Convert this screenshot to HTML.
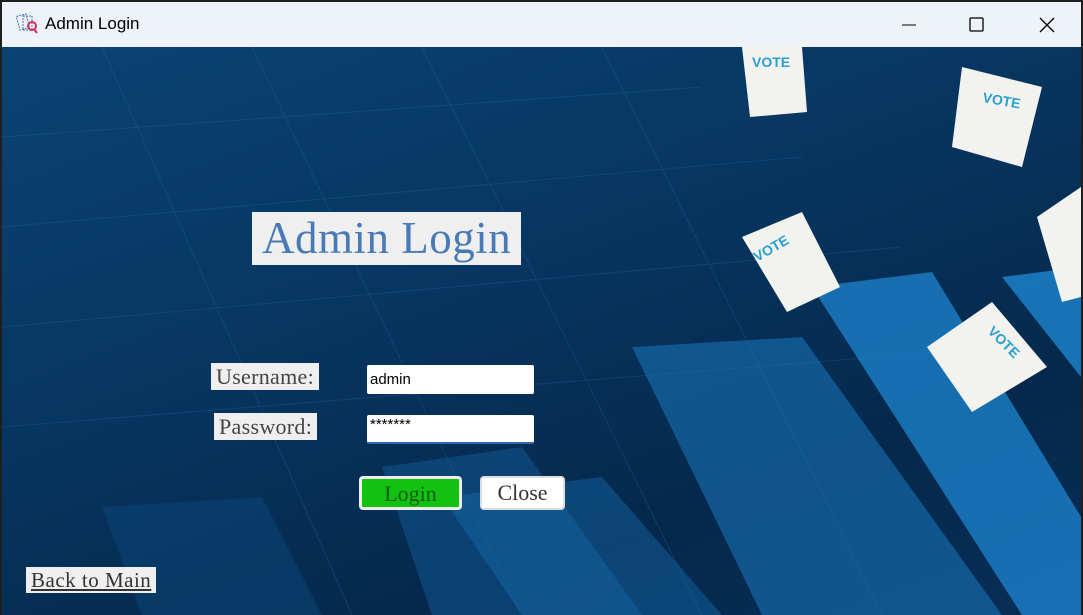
<!DOCTYPE html>
<html><head><meta charset="utf-8"><style>
body{margin:0;width:1083px;height:615px;overflow:hidden;background:#1f1f1f;font-family:"Liberation Serif",serif;position:relative}
.tb{position:absolute;left:2px;top:2px;width:1079px;height:45px;background:#eef2f9;font-family:"Liberation Sans",sans-serif}
.tb .t{position:absolute;left:43px;top:12px;font-size:17px;color:#000}
.main{position:absolute;left:2px;top:47px;width:1079px;height:568px;overflow:hidden;background:linear-gradient(160deg,#0b4373 0%,#073661 40%,#05284c 75%,#082f58 100%)}
.lbl{position:absolute;background:#efeff0;color:#444;font-size:22px;line-height:27px;padding:0 5px;letter-spacing:0.3px}
.in{position:absolute;background:#fff;border-radius:2px;font-family:"Liberation Sans",sans-serif;font-size:15px;color:#000;line-height:30px;padding-left:3px;box-sizing:border-box}
.btn{position:absolute;border:2px solid #ddd;border-radius:4px;font-size:22px;text-align:center;box-sizing:border-box;line-height:30px}
</style></head><body>
<div class="tb">
<svg style="position:absolute;left:14px;top:10px" width="24" height="24" viewBox="0 0 24 24"><rect x="2" y="3" width="10" height="14" fill="none" stroke="#47a" stroke-dasharray="2 1" transform="rotate(-15 7 10)"/><rect x="7" y="4" width="9" height="14" fill="none" stroke="#47a" stroke-dasharray="2 1"/><circle cx="16" cy="14" r="4" fill="none" stroke="#d03060" stroke-width="2"/><line x1="18" y1="17" x2="21" y2="21" stroke="#d03060" stroke-width="2"/></svg>
<div class="t">Admin Login</div>
<svg style="position:absolute;left:898px;top:14px" width="160" height="18"><line x1="2" y1="9" x2="16" y2="9" stroke="#000"/><rect x="70" y="2" width="13" height="13" rx="1" fill="none" stroke="#000" stroke-width="1.3"/><path d="M140 2 L154 16 M154 2 L140 16" stroke="#000" stroke-width="1.3"/></svg>
</div>
<div class="main">
<svg width="1079" height="568" style="position:absolute;left:0;top:0">
<g stroke="#2a6aa0" stroke-opacity="0.3" stroke-width="1">
<path d="M0 90 L700 40 M0 180 L800 110 M0 280 L900 200 M100 0 L350 568 M250 0 L520 568 M420 0 L700 568 M600 0 L880 568 M0 380 L1000 300"/>
</g>
<polygon points="630,300 800,290 1000,568 760,568" fill="#1a78c0" opacity="0.55"/>
<polygon points="810,240 930,225 1079,470 1079,568 1020,568" fill="#1d86d0" opacity="0.75"/>
<polygon points="1000,230 1079,220 1079,330" fill="#1d86d0" opacity="0.8"/>
<polygon points="380,420 520,400 640,568 430,568" fill="#135f9e" opacity="0.45"/>
<polygon points="440,450 600,430 720,568 520,568" fill="#1670b5" opacity="0.4"/>
<polygon points="100,460 260,450 320,568 140,568" fill="#0d4d85" opacity="0.4"/>
<g fill="#f2f2ee"><polygon points="740,0 800,0 805,65 748,70"/><polygon points="960,20 1040,40 1020,120 950,100"/><polygon points="740,190 800,165 838,240 785,265"/><polygon points="925,300 990,255 1045,320 970,365"/><polygon points="1035,170 1079,140 1079,250 1060,255"/></g>
<g fill="#29a0d0" font-family="Liberation Sans" font-weight="bold" font-size="14"><text x="750" y="20">VOTE</text><text x="980" y="55" transform="rotate(10 980 55)">VOTE</text><text x="755" y="215" transform="rotate(-30 755 215)">VOTE</text><text x="985" y="285" transform="rotate(45 985 285)">VOTE</text></g>
</svg>
<div class="lbl" style="left:250px;top:165px;font-size:45px;line-height:53px;color:#4a7ab5;padding:0 10px;letter-spacing:0.5px">Admin Login</div>
<div class="lbl" style="left:209px;top:316px">Username:</div>
<div class="lbl" style="left:212px;top:366px">Password:</div>
<div class="in" style="left:365px;top:318px;width:167px;height:29px">admin</div>
<div class="in" style="left:365px;top:368px;width:167px;height:29px;border-bottom:2px solid #2a6ab0;line-height:20px">*******</div>
<div class="btn" style="left:357px;top:429px;width:103px;height:34px;background:#11c211;color:#1a5a1a;border:3px solid #eee">Login</div>
<div class="btn" style="left:478px;top:429px;width:85px;height:34px;background:#fff;color:#333">Close</div>
<div class="lbl" style="left:24px;top:520px;font-size:21px;line-height:26px;color:#333;text-decoration:underline;padding:0 5px;letter-spacing:0.5px">Back to Main</div>
</div>
</body></html>
